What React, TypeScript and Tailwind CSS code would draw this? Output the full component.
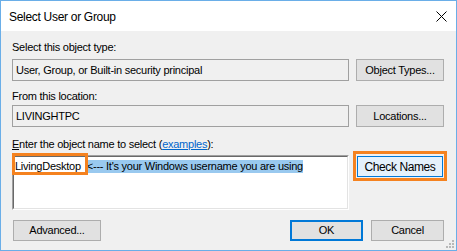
import React from "react";

const body = { fontFamily: '"Liberation Sans", Arial, sans-serif' };

function Btn({ children, className = "" }: { children: React.ReactNode; className?: string }) {
  return (
    <div
      className={
        "flex items-center justify-center bg-[#e1e1e1] border border-[#adadad] text-[11px] text-black " +
        className
      }
    >
      {children}
    </div>
  );
}

export default function App() {
  return (
    <div
      className="w-[457px] h-[251px] border border-[#6aaee8] flex flex-col relative overflow-hidden"
      style={body}
    >
      {/* Title bar */}
      <div className="h-[30px] bg-white flex items-center justify-between pl-[8px] pr-[9px] shrink-0">
        <span className="text-[12px] tracking-[-0.3px] text-black leading-none mt-[1px]">
          Select User or Group
        </span>
        <svg width="11" height="11" viewBox="0 0 11 11" className="mt-[1px]">
          <path d="M0.5 0.5 L10.5 10.5 M10.5 0.5 L0.5 10.5" stroke="#000" strokeWidth="1" />
        </svg>
      </div>

      {/* Body */}
      <div className="flex-1 bg-[#f0f0f0] pl-[11px] pr-[12px] pt-[10px] flex flex-col text-[11px] tracking-[-0.25px] text-black">
        <div className="h-[13px] leading-[13px]">Select this object type:</div>
        <div className="mt-[5px] flex h-[22px] gap-[7px]">
          <div className="w-[337px] h-[22px] border border-[#a0a0a0] bg-[#f0f0f0] flex items-center pl-[3px]">
            User, Group, or Built-in security principal
          </div>
          <Btn className="w-[88px] h-[22px]">Object Types...</Btn>
        </div>

        <div className="mt-[9px] h-[13px] leading-[13px]">From this location:</div>
        <div className="mt-[2px] flex h-[22px] gap-[7px]">
          <div className="w-[337px] h-[22px] border border-[#a0a0a0] bg-[#f0f0f0] flex items-center pl-[3px]">
            LIVINGHTPC
          </div>
          <Btn className="w-[88px] h-[22px]">Locations...</Btn>
        </div>

        <div className="mt-[11px] h-[13px] leading-[13px]">
          <span className="underline">E</span>nter the object name to select (
          <span className="text-[#0066cc] underline">examples</span>):
        </div>
        <div className="mt-[4px] flex h-[55px] gap-[7px]">
          <div className="relative w-[337px] h-[55px] border-t border-l border-[#a0a0a0] border-r border-b border-r-white border-b-white">
            <div className="w-full h-full border-t border-l border-t-[#696969] border-l-[#696969] border-r border-b border-r-[#e3e3e3] border-b-[#e3e3e3] bg-white">
              <div className="flex items-center h-[13px] mt-[3px] pl-[1px] leading-[13px] whitespace-nowrap">
                <span className="pr-[5px]">LivingDesktop</span>
                <span className="bg-[#99c9ef] pl-[1px]">&lt;--- It's your Windows username you are using</span>
              </div>
            </div>
            <div className="absolute left-[-1px] top-[-3px] w-[76px] h-[22px] border-[3px] border-[#f5821f]" />
          </div>
          <div className="relative w-[88px] h-[23px] p-[1px] flex">
            <div className="w-full h-full border border-[#0078d7] bg-[#e5f1fb] flex items-center justify-center text-[12px] tracking-[-0.4px]">
              Check Names
            </div>
            <div className="absolute left-[-3px] top-[-4px] right-[-3px] bottom-[-3px] border-[3px] border-[#f5821f]" />
          </div>
        </div>

        <div className="mt-[10px] flex h-[21px]">
          <Btn className="w-[88px] h-[21px] ml-[1px]">Advanced...</Btn>
          <div className="flex-1" />
          <div className="w-[73px] h-[21px] border-2 border-[#0078d7] bg-[#e1e1e1] flex items-center justify-center">OK</div>
          <Btn className="w-[73px] h-[21px] ml-[8px]">Cancel</Btn>
        </div>
      </div>

      {/* size grip */}
      <svg width="8" height="8" viewBox="0 0 8 8" className="absolute right-[2px] bottom-[2px]">
        <rect x="6" y="0" width="2" height="2" fill="#b8b8b8" />
        <rect x="3" y="3" width="2" height="2" fill="#b8b8b8" />
        <rect x="6" y="3" width="2" height="2" fill="#b8b8b8" />
        <rect x="0" y="6" width="2" height="2" fill="#b8b8b8" />
        <rect x="3" y="6" width="2" height="2" fill="#b8b8b8" />
        <rect x="6" y="6" width="2" height="2" fill="#b8b8b8" />
      </svg>
    </div>
  );
}
